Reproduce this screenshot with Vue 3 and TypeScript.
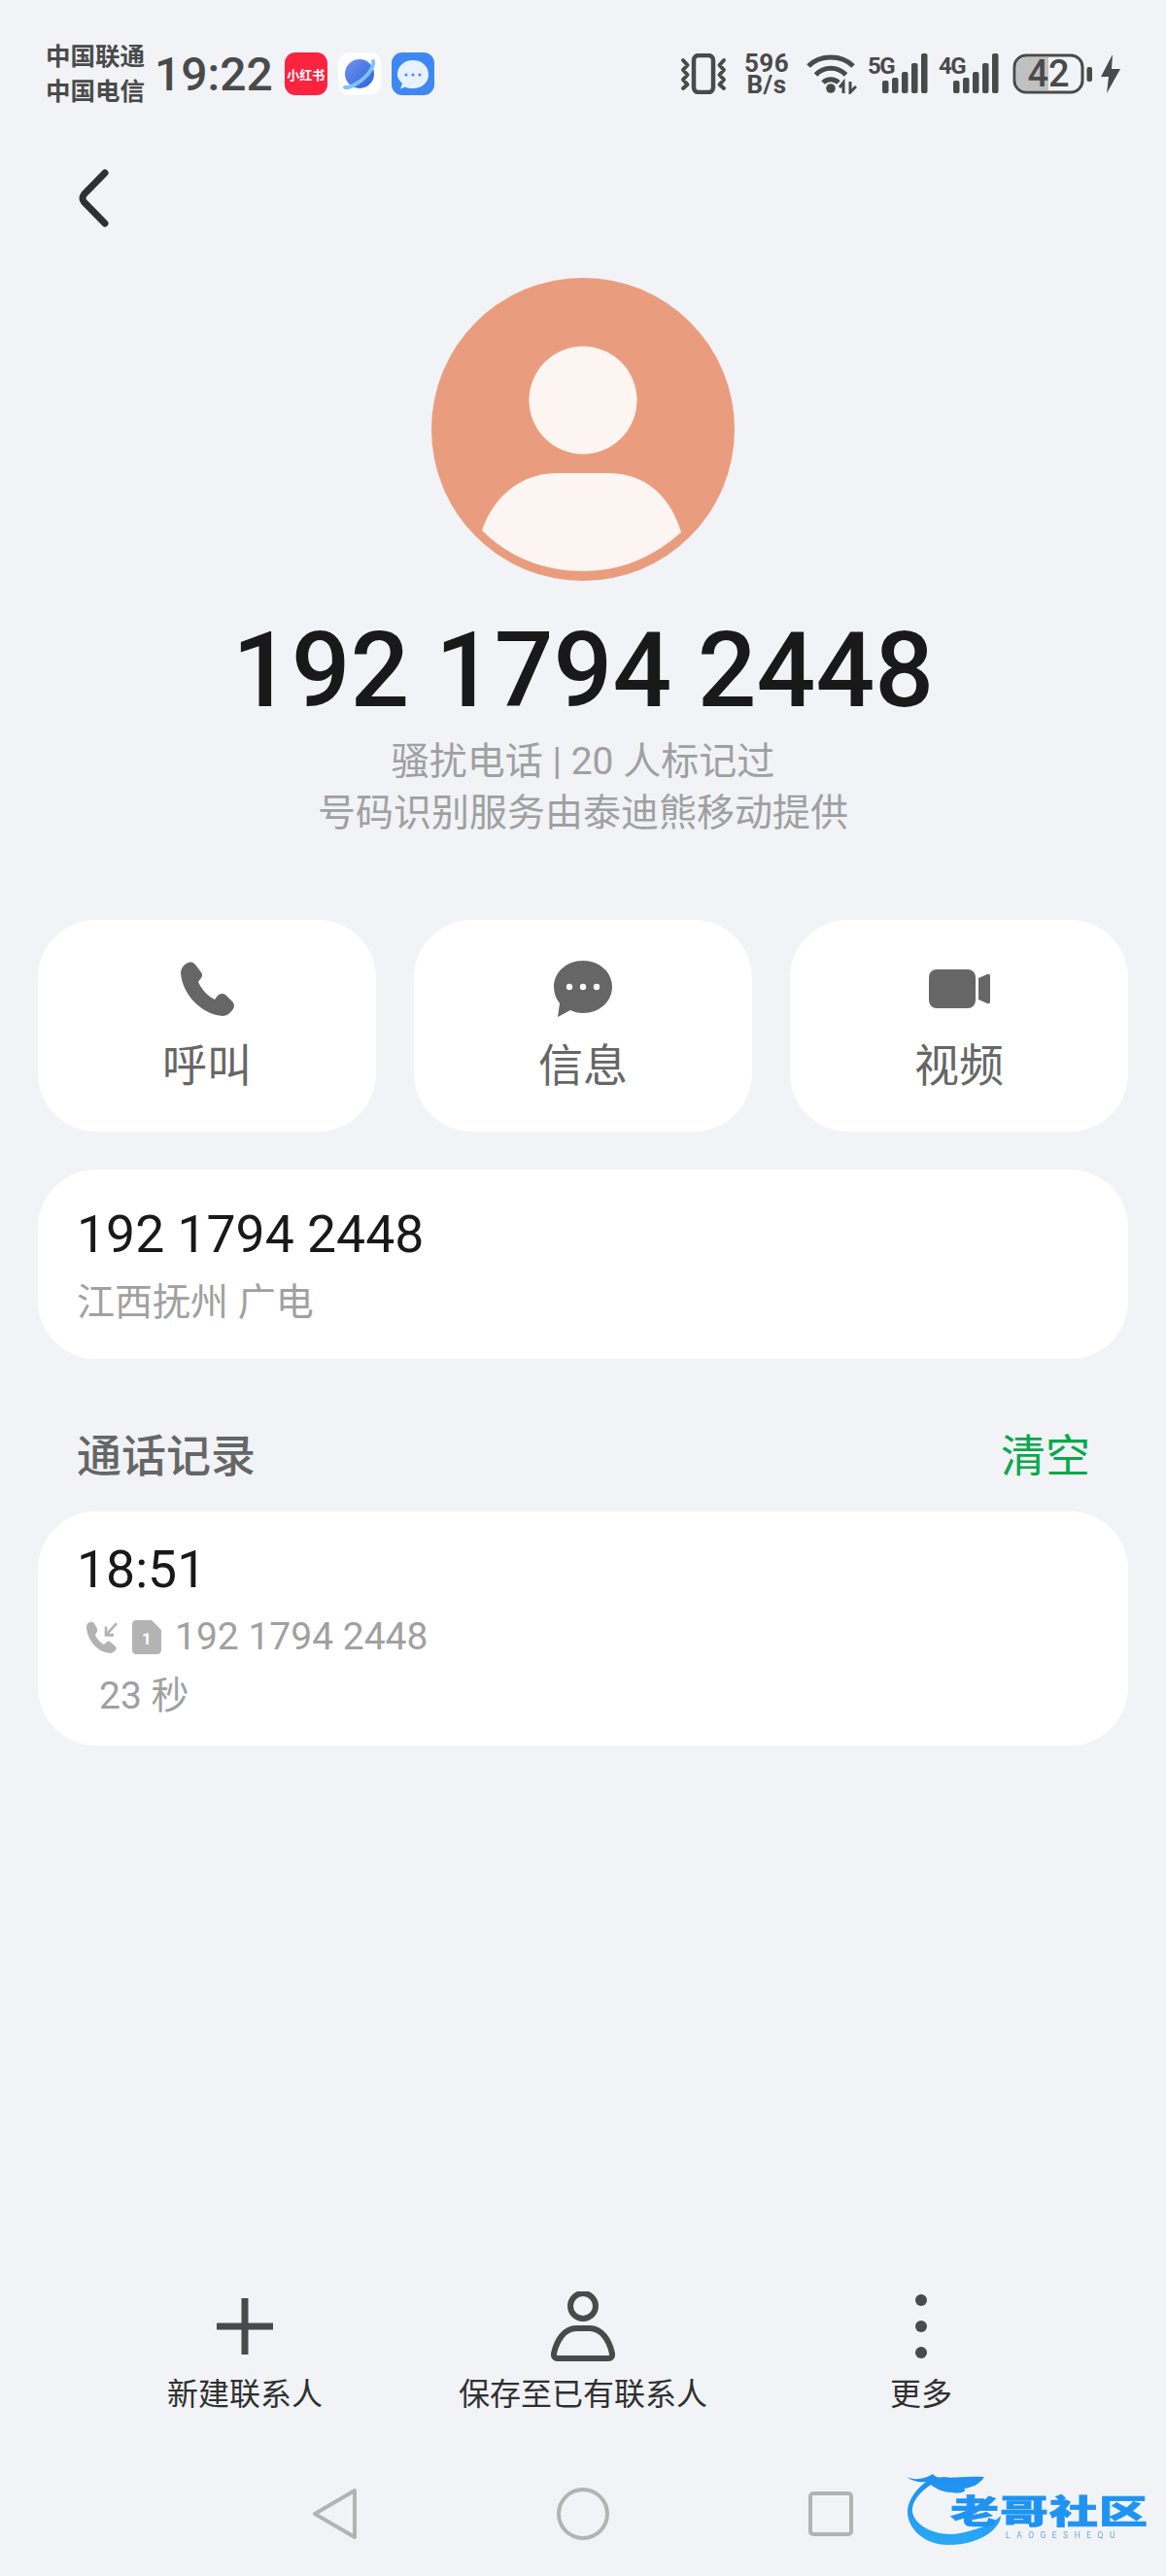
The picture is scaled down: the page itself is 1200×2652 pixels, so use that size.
<script setup lang="ts">
const actions = ['呼叫', '信息', '视频'];
const signals = [
  { label: '5G', width: 62 },
  { label: '4G', width: 62 },
];
const bars = [
  { x: 15, h: 13 },
  { x: 25, h: 16 },
  { x: 35, h: 22 },
  { x: 45, h: 31 },
  { x: 55, h: 41 },
];
</script>

<template>
  <div class="page">
    <header class="status">
      <div class="status-left">
        <div class="carriers">
          <span>中国联通</span>
          <span>中国电信</span>
        </div>
        <span class="clock">19:22</span>
        <div class="app-icons">
          <div class="app app-red"><span>小红书</span></div>
          <div class="app app-white">
            <svg width="44" height="44" viewBox="0 0 44 44">
              <defs>
                <linearGradient id="planet" x1="0" y1="0" x2="1" y2="1">
                  <stop offset="0" stop-color="#6f93f0" />
                  <stop offset="1" stop-color="#2f62d8" />
                </linearGradient>
              </defs>
              <circle cx="22" cy="22" r="15" fill="url(#planet)" />
              <path d="M7 36C12 37 24 30 30 23C35 17 37 12 36 9" fill="none" stroke="#7cc4fb" stroke-width="4" stroke-linecap="round" />
            </svg>
          </div>
          <div class="app app-blue">
            <svg width="44" height="44" viewBox="0 0 44 44">
              <path d="M22 8C31 8 38 14 38 23C38 31 31 37 22 37C19 37 16 36.500 14 35.500L9 37.500L11 32C8 29 6 26 6 23C6 14 13 8 22 8Z" fill="#e8f2fe" />
              <circle cx="15" cy="23" r="1.600" fill="#4d8cf0" />
              <circle cx="22" cy="23" r="1.600" fill="#4d8cf0" />
              <circle cx="29" cy="23" r="1.600" fill="#4d8cf0" />
            </svg>
          </div>
        </div>
      </div>
      <div class="status-right">
        <svg class="vibrate" width="48" height="42" viewBox="0 0 48 42">
          <rect x="14" y="2" width="20" height="38" rx="5" fill="none" stroke="#4a4a4a" stroke-width="4.500" />
          <path d="M3 7L7.500 12L3 17L7.500 22L3 27L7.500 32L3 36M45 7L40.500 12L45 17L40.500 22L45 27L40.500 32L45 36" fill="none" stroke="#4a4a4a" stroke-width="4" stroke-linejoin="round" stroke-linecap="round" />
        </svg>
        <div class="speed">
          <span>596</span>
          <span>B/s</span>
        </div>
        <svg class="wifi" width="52" height="42" viewBox="0 0 52 42">
          <path d="M2 13C14 1 36 1 48 13M9.500 22C18 13 32 13 40.500 22M17 30C21.500 25.500 28.500 25.500 33 30" fill="none" stroke="#4a4a4a" stroke-width="5" />
          <circle cx="25" cy="36" r="4.800" fill="#4a4a4a" />
          <path d="M38 41V30L34 35M45 29V40L51 34" fill="none" stroke="#4a4a4a" stroke-width="3" />
        </svg>
        <svg v-for="s in signals" :key="s.label" class="signal" :width="s.width" height="42" viewBox="0 0 62 42">
          <text x="0" y="21" class="signal-label">{{ s.label }}</text>
          <rect v-for="b in bars" :key="b.x" :x="b.x" :y="41 - b.h" width="6.500" :height="b.h" rx="2" fill="#4a4a4a" />
        </svg>
        <svg class="battery" width="84" height="42" viewBox="0 0 84 42">
          <rect x="2" y="2" width="70" height="38" rx="12" fill="none" stroke="#4a4a4a" stroke-width="3" />
          <path d="M14 4H37V38H14C8 38 4 34 4 28V14C4 8 8 4 14 4Z" fill="#c0c0c0" />
          <text x="37" y="34" text-anchor="middle" class="battery-text">42</text>
          <rect x="76.500" y="14" width="5.500" height="15" rx="2" fill="#4a4a4a" />
        </svg>
        <svg class="bolt" width="20" height="40" viewBox="0 0 20 40">
          <path d="M12 0L0 23H8L6 40L20 15H11Z" fill="#4a4a4a" />
        </svg>
      </div>
    </header>

    <svg class="back" width="32" height="60" viewBox="0 0 32 60">
      <path d="M27 4L5.500 26Q2.500 30 5.500 34L27 56" fill="none" stroke="#303030" stroke-width="7" stroke-linecap="round" stroke-linejoin="round" />
    </svg>

    <svg class="avatar" width="312" height="312" viewBox="0 0 312 312">
      <circle cx="156" cy="156" r="156" fill="#ea9d7e" />
      <circle cx="156" cy="126" r="55.500" fill="#fdf5f1" />
      <path d="M52 260C64 225 92 201 130 201H182C220 201 246 225 257 262C228 288 194 302 156 302C116 302 80 288 52 260Z" fill="#fdf5f1" />
    </svg>

    <h1 class="title">192 1794 2448</h1>
    <p class="subtitle">骚扰电话 | 20 人标记过</p>
    <p class="subtitle">号码识别服务由泰迪熊移动提供</p>

    <div class="actions">
      <div v-for="(label, i) in actions" :key="label" class="action">
        <div class="action-icon">
          <svg v-if="i === 0" width="56" height="58" viewBox="0 0 56 58">
            <path d="M1 13C1 8 5 3 9 2C12 1 14 2 16 4L22 12C24 15 23 17 21 19L19 22C23 30 28 36 36 40L39 36C41 34 44 33 47 35L54 42C57 45 56 49 54 51C52 54 48 57 44 57C22 55 3 35 1 13Z" fill="#666" />
          </svg>
          <svg v-else-if="i === 1" width="60" height="58" viewBox="0 0 60 58">
            <path d="M30 0C47 0 60 12 60 27C60 42 47 54 30 54C25 54 21 53 17 51L4 58L6 44C2 39 0 33 0 27C0 12 13 0 30 0Z" fill="#666" />
            <circle cx="16" cy="27" r="3.200" fill="#fff" />
            <circle cx="30" cy="27" r="3.200" fill="#fff" />
            <circle cx="44" cy="27" r="3.200" fill="#fff" />
          </svg>
          <svg v-else width="63" height="42" viewBox="0 0 63 42">
            <rect x="0" y="1" width="48" height="40" rx="8" fill="#666" />
            <path d="M51 10L60 6C61.500 5.500 63 6 63 8V34C63 36 61.500 36.500 60 36L51 32Z" fill="#666" />
          </svg>
        </div>
        <span class="action-label">{{ label }}</span>
      </div>
    </div>

    <section class="card info-card">
      <div class="card-title">192 1794 2448</div>
      <div class="card-sub">江西抚州 广电</div>
    </section>

    <div class="section-head">
      <span>通话记录</span>
      <span class="clear">清空</span>
    </div>

    <section class="card log-card">
      <div class="card-title">18:51</div>
      <div class="log-row">
        <svg width="34" height="33" viewBox="0 0 34 30" preserveAspectRatio="none">
          <path d="M1 6C1 3 3 1 5 1C7 0 8 1 9 2L12 7C13 9 12 10 11 11L10 13C12 17 15 20 19 22L21 20C22 19 24 18 25 19L30 23C32 24 32 26 31 27C29 29 27 30 25 30C12 29 2 18 1 6Z" fill="#b3b3b3" />
          <path d="M32 2L21 13M21 5V13H29" fill="none" stroke="#b3b3b3" stroke-width="2.600" />
        </svg>
        <svg class="sim" width="30" height="35" viewBox="0 0 30 35">
          <path d="M4 0H20L30 10V31C30 33 28 35 26 35H4C2 35 0 33 0 31V4C0 2 2 0 4 0Z" fill="#b3b3b3" />
          <text x="15" y="25" text-anchor="middle" class="sim-text">1</text>
        </svg>
        <span class="log-number">192 1794 2448</span>
      </div>
      <div class="card-sub log-duration">23 秒</div>
    </section>

    <footer class="bottom">
      <div class="tools">
        <div class="tool">
          <div class="tool-icon">
            <svg width="58" height="58" viewBox="0 0 58 58">
              <path d="M29 1V57M1 29H57" fill="none" stroke="#4a4a4a" stroke-width="7" stroke-linecap="round" />
            </svg>
          </div>
          <span>新建联系人</span>
        </div>
        <div class="tool">
          <div class="tool-icon">
            <svg width="66" height="72" viewBox="0 0 66 72">
              <circle cx="33" cy="15" r="13" fill="none" stroke="#4a4a4a" stroke-width="6" />
              <path d="M26 38H40C52 38 60 50 63 64C63.500 67 62 69 59 69H7C4 69 2.500 67 3 64C6 50 14 38 26 38Z" fill="none" stroke="#4a4a4a" stroke-width="6" />
            </svg>
          </div>
          <span>保存至已有联系人</span>
        </div>
        <div class="tool">
          <div class="tool-icon">
            <svg width="14" height="68" viewBox="0 0 14 68">
              <circle cx="7" cy="7" r="6" fill="#4a4a4a" />
              <circle cx="7" cy="34" r="6" fill="#4a4a4a" />
              <circle cx="7" cy="61" r="6" fill="#4a4a4a" />
            </svg>
          </div>
          <span>更多</span>
        </div>
      </div>
      <nav class="nav">
        <svg width="48" height="54" viewBox="0 0 48 54">
          <path d="M44 3L3 27L44 51Z" fill="none" stroke="#b3b3b3" stroke-width="4" stroke-linejoin="round" />
        </svg>
        <svg width="54" height="54" viewBox="0 0 54 54">
          <circle cx="27" cy="27" r="25" fill="none" stroke="#b3b3b3" stroke-width="4" />
        </svg>
        <svg width="46" height="46" viewBox="0 0 46 46">
          <rect x="2" y="2" width="42" height="42" rx="3" fill="none" stroke="#b3b3b3" stroke-width="4" />
        </svg>
      </nav>
    </footer>

    <svg class="watermark" width="280" height="100" viewBox="0 0 280 100">
      <defs>
        <linearGradient id="mark" x1="0" y1="0" x2="0" y2="1">
          <stop offset="0" stop-color="#1e8ff0" />
          <stop offset="1" stop-color="#2aa8f5" />
        </linearGradient>
      </defs>
      <path d="M13 20C22 24 32 22 40 17C44 22 48 20 52 20C60 22 72 19 93 20C88 28 80 31 72 32C76 34 70 38 60 36C52 36 44 33 38 28C26 36 18 46 19 56C22 72 46 82 68 78C88 74 102 68 110 60C110 72 90 90 56 90C30 90 13 72 14 54C15 42 24 32 33 25C26 26 18 24 13 20Z" fill="url(#mark)" />
      <text transform="translate(58 68) scale(1 .68)" class="mark-title">老哥社区</text>
      <text x="115" y="83" class="mark-sub">LAOGESHEQU</text>
    </svg>
  </div>
</template>

<style>
html,
body {
  margin: 0;
  background: #f1f3f7;
}
</style>

<style scoped>
.page {
  position: relative;
  display: flex;
  flex-direction: column;
  height: 2652px;
  overflow: hidden;
  font-family: Roboto, "Noto Sans CJK SC", sans-serif;
  color: #191919;
  background: #f1f3f7;
}

.status {
  display: flex;
  align-items: center;
  justify-content: space-between;
  height: 72px;
  padding: 40px 47px 0 47px;
  color: #4a4a4a;
}

.status-left,
.status-right {
  display: flex;
  align-items: center;
}

.carriers {
  display: flex;
  flex-direction: column;
  font-size: 25.500px;
  font-weight: 700;
  line-height: 36px;
}

.clock {
  margin-left: 10px;
  font-size: 48px;
  font-weight: 500;
}

.app-icons {
  display: flex;
  gap: 11px;
  margin-left: 12px;
}

.app {
  display: flex;
  align-items: center;
  justify-content: center;
  width: 44px;
  height: 44px;
  overflow: hidden;
  border-radius: 11px;
}

.app-red {
  font-size: 13px;
  font-weight: 700;
  color: #fff;
  white-space: nowrap;
  background: #fb2340;
}

.app-white {
  background: #fff;
}

.app-blue {
  background: #3f87f3;
}

.speed {
  display: flex;
  flex-direction: column;
  align-items: center;
  width: 46px;
  margin-left: 18px;
  font-size: 26px;
  font-weight: 700;
  line-height: 22px;
  letter-spacing: 0.5px;
}

.wifi {
  margin-left: 18px;
}

.signal {
  margin-left: 11px;
}

.signal-label {
  font-size: 24px;
  font-weight: 700;
  letter-spacing: -1.500px;
  fill: #4a4a4a;
}

.battery {
  margin-left: 14px;
}

.battery-text {
  font-size: 38px;
  font-weight: 500;
  fill: #4a4a4a;
}

.bolt {
  margin-left: 7px;
}

.back {
  margin: 62px 0 0 81px;
}

.avatar {
  align-self: center;
  margin-top: 52px;
}

.title {
  margin: 38px 0 12px;
  font-size: 107px;
  font-weight: 500;
  line-height: 110px;
  text-align: center;
}

.subtitle {
  margin: 0;
  font-size: 39px;
  line-height: 53px;
  color: #a0a0a0;
  text-align: center;
}

.actions {
  display: grid;
  grid-template-columns: repeat(3, 348px);
  gap: 39px;
  justify-content: center;
  margin-top: 83px;
}

.action {
  display: flex;
  flex-direction: column;
  align-items: center;
  height: 218px;
  background: #fff;
  border-radius: 60px;
}

.action-icon {
  display: flex;
  align-items: center;
  justify-content: center;
  height: 60px;
  margin-top: 41px;
}

.action-label {
  margin-top: 24px;
  font-size: 46px;
  line-height: 50px;
  color: #666;
}

.card {
  margin: 0 39px;
  background: #fff;
  border-radius: 60px;
}

.info-card {
  height: 195px;
  padding: 37px 40px 0;
  margin-top: 39px;
  box-sizing: border-box;
}

.card-title {
  font-size: 53.500px;
  line-height: 60px;
}

.card-sub {
  margin-top: 15px;
  font-size: 39px;
  line-height: 50px;
  color: #a0a0a0;
}

.section-head {
  display: flex;
  justify-content: space-between;
  padding: 2px 78px 0 79px;
  margin-top: 68px;
  font-size: 46px;
  font-weight: 500;
  line-height: 60px;
  color: #666;
}

.clear {
  font-weight: 400;
  color: #0ba84a;
}

.log-card {
  height: 241px;
  padding: 30px 40px 0;
  margin-top: 27px;
  box-sizing: border-box;
}

.log-row {
  display: flex;
  align-items: center;
  height: 50px;
  padding-left: 9px;
  margin-top: 14px;
}

.sim {
  margin-left: 14px;
}

.sim-text {
  font-size: 17px;
  font-weight: 700;
  fill: #fff;
}

.log-number {
  margin-left: 14px;
  font-size: 39px;
  color: #a0a0a0;
}

.log-duration {
  padding-left: 23px;
  margin-top: 13px;
  line-height: 46px;
}

.bottom {
  margin-top: auto;
  padding-bottom: 37px;
}

.tools {
  display: grid;
  grid-template-columns: repeat(3, 348px);
  padding: 0 78px;
}

.tool {
  display: flex;
  flex-direction: column;
  align-items: center;
  font-size: 32px;
  line-height: 44px;
  color: #303030;
}

.tool-icon {
  display: flex;
  align-items: center;
  justify-content: center;
  height: 88px;
  margin-bottom: 4px;
}

.nav {
  display: grid;
  grid-template-columns: repeat(3, 255px);
  align-items: center;
  justify-items: center;
  padding: 0 217px;
  margin-top: 74px;
}

.watermark {
  position: absolute;
  top: 2530px;
  left: 920px;
  filter: blur(0.6px);
}

.mark-title {
  font-family: "Noto Sans CJK SC", sans-serif;
  font-size: 50px;
  font-weight: 900;
  letter-spacing: 1px;
  fill: #1e93f2;
  stroke: #1e93f2;
  stroke-width: 1px;
}

.mark-sub {
  font-size: 8.500px;
  letter-spacing: 6.500px;
  fill: #6aa6dc;
}
</style>
